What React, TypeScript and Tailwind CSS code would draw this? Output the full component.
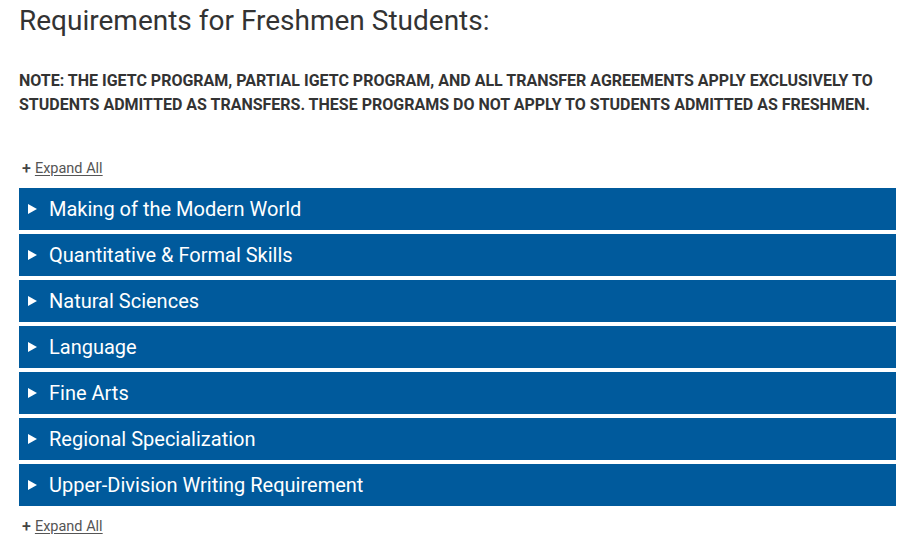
import React from "react";

const items = [
  "Making of the Modern World",
  "Quantitative & Formal Skills",
  "Natural Sciences",
  "Language",
  "Fine Arts",
  "Regional Specialization",
  "Upper-Division Writing Requirement",
];

function ExpandAll() {
  return (
    <div className="flex items-center h-[20px] pl-[3px] text-[14.5px] text-[#555]">
      <span className="font-medium text-[16px] leading-none mr-[4px] text-[#444]">+</span>
      <span className="underline underline-offset-2">Expand All</span>
    </div>
  );
}

export default function App() {
  return (
    <div className="bg-white min-h-[549px] px-[19px] pr-[20px] text-[#333]" style={{ fontFamily: "Roboto, 'Liberation Sans', sans-serif" }}>
      <h1 className="text-[28px] leading-[36px] pt-[3px] font-normal text-[#333]">Requirements for Freshmen Students:</h1>
      <p className="mt-[30px] text-[16px] leading-[24px] font-bold uppercase text-[#333]">
        Note: The IGETC Program, Partial IGETC Program, and all transfer agreements apply exclusively to students admitted as transfers. These programs do not apply to students admitted as freshmen.
      </p>
      <div className="mt-[42px]">
        <ExpandAll />
      </div>
      <div className="mt-[9px] flex flex-col gap-[4px]">
        {items.map((t) => (
          <div key={t} className="h-[42px] bg-[#005a9c] flex items-center text-white">
            <svg width="9" height="10" viewBox="0 0 9 10" className="ml-[9px] mr-[12px]" fill="white">
              <polygon points="0,0 9,5 0,10" />
            </svg>
            <span className="text-[20px]">{t}</span>
          </div>
        ))}
      </div>
      <div className="mt-[11px]">
        <ExpandAll />
      </div>
    </div>
  );
}
